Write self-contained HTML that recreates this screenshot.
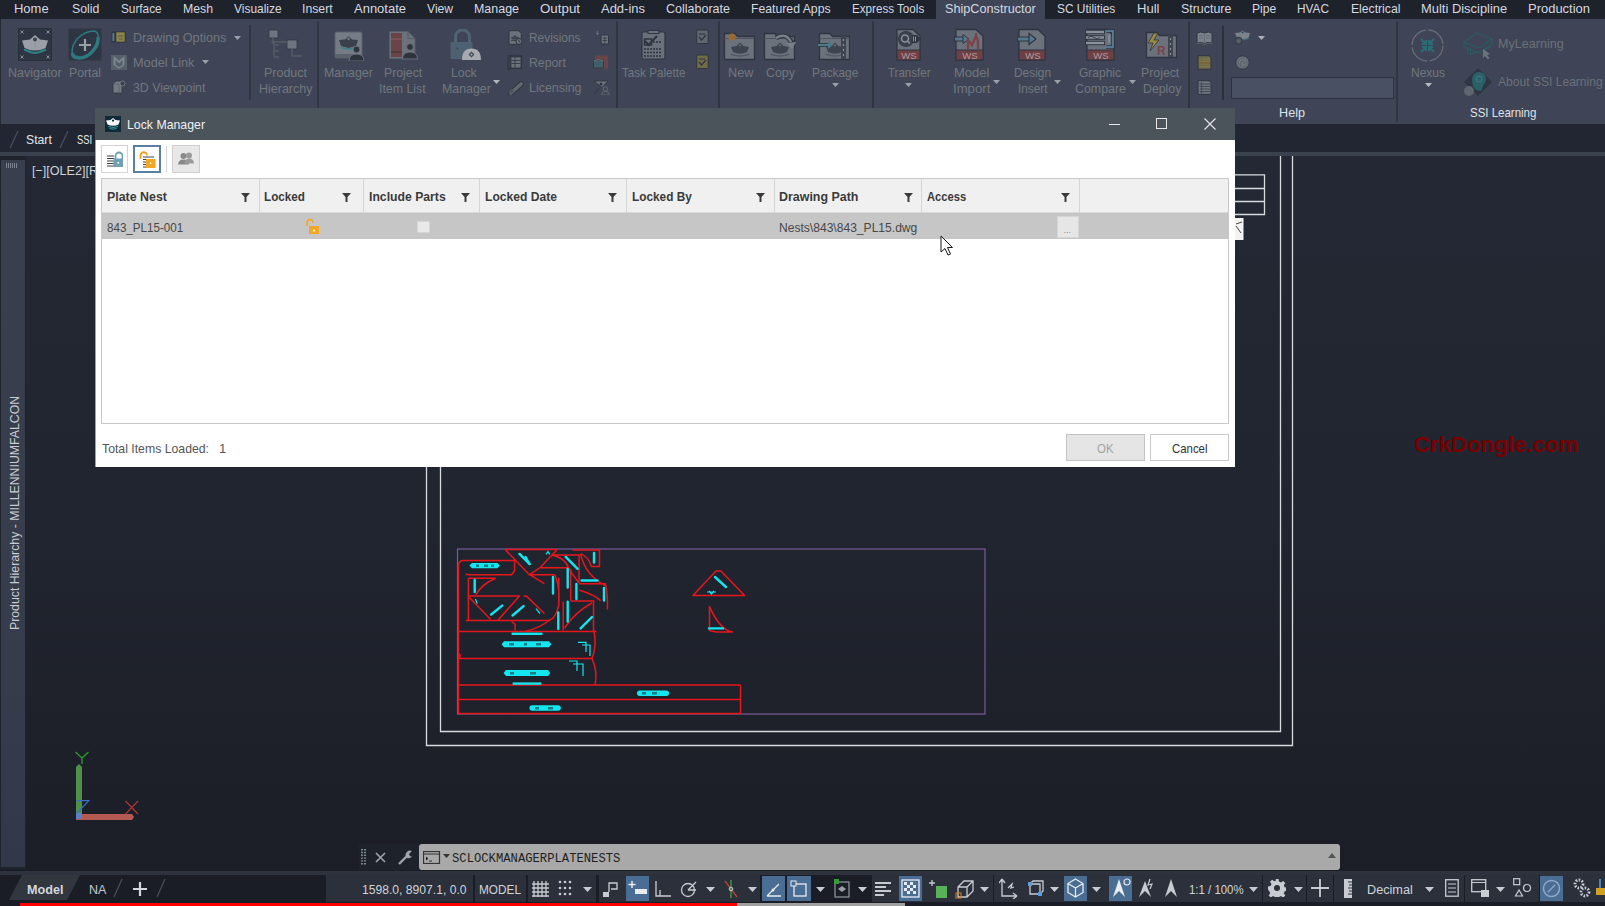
<!DOCTYPE html>
<html><head><meta charset="utf-8"><style>
html,body{margin:0;padding:0;}
body{width:1605px;height:906px;position:relative;overflow:hidden;background:#21252f;font-family:"Liberation Sans",sans-serif;}
.t{position:absolute;white-space:nowrap;transform-origin:0 50%;}
.r{position:absolute;}
svg{position:absolute;}
</style></head><body>
<div class="r" style="left:0px;top:0px;width:1605px;height:19px;background:#1e222b;"></div>
<div class="r" style="left:936px;top:0px;width:109px;height:19px;background:#3f4556;"></div>
<div class="t" id="t1" style="left:14.0px;top:1.80px;font-size:13px;line-height:13px;color:#d5d9e0;font-weight:normal;font-family:'Liberation Sans', sans-serif;transform:scaleX(0.9975);">Home</div>
<div class="t" id="t2" style="left:72.0px;top:1.80px;font-size:13px;line-height:13px;color:#d5d9e0;font-weight:normal;font-family:'Liberation Sans', sans-serif;transform:scaleX(0.9474);">Solid</div>
<div class="t" id="t3" style="left:121.0px;top:1.80px;font-size:13px;line-height:13px;color:#d5d9e0;font-weight:normal;font-family:'Liberation Sans', sans-serif;transform:scaleX(0.9060);">Surface</div>
<div class="t" id="t4" style="left:183.0px;top:1.80px;font-size:13px;line-height:13px;color:#d5d9e0;font-weight:normal;font-family:'Liberation Sans', sans-serif;transform:scaleX(0.9435);">Mesh</div>
<div class="t" id="t5" style="left:234.0px;top:1.80px;font-size:13px;line-height:13px;color:#d5d9e0;font-weight:normal;font-family:'Liberation Sans', sans-serif;transform:scaleX(0.9190);">Visualize</div>
<div class="t" id="t6" style="left:302.0px;top:1.80px;font-size:13px;line-height:13px;color:#d5d9e0;font-weight:normal;font-family:'Liberation Sans', sans-serif;transform:scaleX(0.9442);">Insert</div>
<div class="t" id="t7" style="left:354.0px;top:1.80px;font-size:13px;line-height:13px;color:#d5d9e0;font-weight:normal;font-family:'Liberation Sans', sans-serif;transform:scaleX(0.9991);">Annotate</div>
<div class="t" id="t8" style="left:426.7px;top:1.80px;font-size:13px;line-height:13px;color:#d5d9e0;font-weight:normal;font-family:'Liberation Sans', sans-serif;transform:scaleX(0.9337);">View</div>
<div class="t" id="t9" style="left:474.0px;top:1.80px;font-size:13px;line-height:13px;color:#d5d9e0;font-weight:normal;font-family:'Liberation Sans', sans-serif;transform:scaleX(0.9578);">Manage</div>
<div class="t" id="t10" style="left:540.0px;top:1.80px;font-size:13px;line-height:13px;color:#d5d9e0;font-weight:normal;font-family:'Liberation Sans', sans-serif;transform:scaleX(1.0248);">Output</div>
<div class="t" id="t11" style="left:601.0px;top:1.80px;font-size:13px;line-height:13px;color:#d5d9e0;font-weight:normal;font-family:'Liberation Sans', sans-serif;transform:scaleX(0.9982);">Add-ins</div>
<div class="t" id="t12" style="left:666.0px;top:1.80px;font-size:13px;line-height:13px;color:#d5d9e0;font-weight:normal;font-family:'Liberation Sans', sans-serif;transform:scaleX(0.9624);">Collaborate</div>
<div class="t" id="t13" style="left:751.0px;top:1.80px;font-size:13px;line-height:13px;color:#d5d9e0;font-weight:normal;font-family:'Liberation Sans', sans-serif;transform:scaleX(0.9413);">Featured Apps</div>
<div class="t" id="t14" style="left:851.8px;top:1.80px;font-size:13px;line-height:13px;color:#d5d9e0;font-weight:normal;font-family:'Liberation Sans', sans-serif;transform:scaleX(0.8948);">Express Tools</div>
<div class="t" id="t15" style="left:945.0px;top:1.80px;font-size:13px;line-height:13px;color:#d5d9e0;font-weight:normal;font-family:'Liberation Sans', sans-serif;transform:scaleX(0.9741);">ShipConstructor</div>
<div class="t" id="t16" style="left:1056.7px;top:1.80px;font-size:13px;line-height:13px;color:#d5d9e0;font-weight:normal;font-family:'Liberation Sans', sans-serif;transform:scaleX(0.9170);">SC Utilities</div>
<div class="t" id="t17" style="left:1136.5px;top:1.80px;font-size:13px;line-height:13px;color:#d5d9e0;font-weight:normal;font-family:'Liberation Sans', sans-serif;transform:scaleX(1.0042);">Hull</div>
<div class="t" id="t18" style="left:1180.6px;top:1.80px;font-size:13px;line-height:13px;color:#d5d9e0;font-weight:normal;font-family:'Liberation Sans', sans-serif;transform:scaleX(0.9555);">Structure</div>
<div class="t" id="t19" style="left:1251.7px;top:1.80px;font-size:13px;line-height:13px;color:#d5d9e0;font-weight:normal;font-family:'Liberation Sans', sans-serif;transform:scaleX(0.9335);">Pipe</div>
<div class="t" id="t20" style="left:1297.0px;top:1.80px;font-size:13px;line-height:13px;color:#d5d9e0;font-weight:normal;font-family:'Liberation Sans', sans-serif;transform:scaleX(0.9102);">HVAC</div>
<div class="t" id="t21" style="left:1350.6px;top:1.80px;font-size:13px;line-height:13px;color:#d5d9e0;font-weight:normal;font-family:'Liberation Sans', sans-serif;transform:scaleX(0.9365);">Electrical</div>
<div class="t" id="t22" style="left:1420.8px;top:1.80px;font-size:13px;line-height:13px;color:#d5d9e0;font-weight:normal;font-family:'Liberation Sans', sans-serif;transform:scaleX(0.9942);">Multi Discipline</div>
<div class="t" id="t23" style="left:1528.0px;top:1.80px;font-size:13px;line-height:13px;color:#d5d9e0;font-weight:normal;font-family:'Liberation Sans', sans-serif;transform:scaleX(0.9975);">Production</div>
<div class="r" style="left:0px;top:19px;width:1605px;height:105px;background:#3f4556;"></div>
<div class="r" style="left:0px;top:19px;width:1px;height:105px;background:#262a33;"></div>
<div class="r" style="left:317px;top:21px;width:2px;height:103px;background:#30353f;"></div>
<div class="r" style="left:616px;top:21px;width:2px;height:103px;background:#30353f;"></div>
<div class="r" style="left:718px;top:21px;width:2px;height:103px;background:#30353f;"></div>
<div class="r" style="left:872px;top:21px;width:2px;height:103px;background:#30353f;"></div>
<div class="r" style="left:1188px;top:21px;width:2px;height:103px;background:#30353f;"></div>
<div class="r" style="left:1396px;top:21px;width:2px;height:101px;background:#30353f;"></div>
<div class="r" style="left:249px;top:25px;width:1.5px;height:75px;background:#30353f;"></div>
<div class="r" style="left:1222px;top:26px;width:2px;height:74px;background:#2b303a;"></div>
<svg style="left:18px;top:28px" width="34" height="33" viewBox="0 0 34 33"><rect x="0.5" y="0.5" width="33" height="32" fill="#2f3643" stroke="#2a303b"/><path d="M2.5 2.5l3 3M5.5 2.5l-3 3M28.5 2.5l3 3M31.5 2.5l-3 3M2.5 27.5l3 3M5.5 27.5l-3 3M28.5 27.5l3 3M31.5 27.5l-3 3" stroke="#858b95" stroke-width="1"/><path d="M4 12.5L12 11.5L17 7L22 11.5L30 12.5L27.5 20Q17 25 6.5 20Z" fill="#9a9fa8"/><circle cx="17" cy="11.5" r="2" fill="#3a404c"/><path d="M17 15V21" stroke="#8a8f98" stroke-width="0.8"/><path d="M6 21.5Q11 24 17 25Q23 24 28 21.5" stroke="#2f7f86" stroke-width="2" fill="none"/></svg>
<div class="t" id="t24" style="left:8.3px;top:66.20px;font-size:13px;line-height:13px;color:#71777f;font-weight:normal;font-family:'Liberation Sans', sans-serif;transform:scaleX(0.9651);">Navigator</div>
<svg style="left:68px;top:28px" width="34" height="33" viewBox="0 0 34 33"><rect x="0.5" y="0.5" width="33" height="32" fill="#2f3643"/><path d="M5 27Q2 20 9 11Q17 3 26 3Q31 4 30 10" stroke="#2c7a80" stroke-width="1.5" fill="none"/><path d="M30 9Q31 17 23 25Q15 32 7 29Q4 28 5 25" stroke="#2c7a80" stroke-width="3.5" fill="none"/><path d="M17 11V23M11 17H23" stroke="#9a9fa8" stroke-width="2.2"/></svg>
<div class="t" id="t25" style="left:68.7px;top:66.20px;font-size:13px;line-height:13px;color:#71777f;font-weight:normal;font-family:'Liberation Sans', sans-serif;transform:scaleX(0.9420);">Portal</div>
<svg style="left:111px;top:31px" width="15" height="12" viewBox="0 0 15 12"><rect x="0.5" y="0.5" width="14" height="11" fill="#2f3643"/><rect x="1.5" y="2" width="1.8" height="8" fill="#5a7e94"/><rect x="5" y="1" width="9" height="10" fill="#8a8548" stroke="#2f3540" stroke-width="0.6"/><path d="M7 5H12M8 8H12" stroke="#5a5a3a" stroke-width="1"/></svg>
<div class="t" id="t26" style="left:132.6px;top:31.30px;font-size:13px;line-height:13px;color:#71777f;font-weight:normal;font-family:'Liberation Sans', sans-serif;transform:scaleX(0.9708);">Drawing Options</div>
<svg style="left:234px;top:35.5px" width="7" height="4" viewBox="0 0 7 4"><path d="M0 0H7L3.5 4Z" fill="#9aa0aa"/></svg>
<svg style="left:111px;top:55px" width="16" height="15" viewBox="0 0 16 15"><rect x="0" y="0" width="16" height="15" fill="#56606a"/><path d="M3.5 10V3L8 7L12.5 3V10" stroke="#7e8790" stroke-width="1.8" fill="none"/><path d="M3.5 10L8 13L12.5 10" stroke="#7e8790" stroke-width="1.2" fill="none"/></svg>
<div class="t" id="t27" style="left:132.6px;top:55.80px;font-size:13px;line-height:13px;color:#71777f;font-weight:normal;font-family:'Liberation Sans', sans-serif;transform:scaleX(0.9765);">Model Link</div>
<svg style="left:202px;top:60px" width="7" height="4" viewBox="0 0 7 4"><path d="M0 0H7L3.5 4Z" fill="#9aa0aa"/></svg>
<svg style="left:112px;top:80px" width="14" height="14" viewBox="0 0 14 14"><path d="M1 4L4 1H10V13H1Z" fill="#737983" stroke="#2f3540" stroke-width="0.8"/><path d="M1 4H7V13" stroke="#5c626c" stroke-width="0.8" fill="none"/><circle cx="10.5" cy="3.5" r="2.5" fill="#3b414c" stroke="#858b95" stroke-width="0.7"/></svg>
<div class="t" id="t28" style="left:132.6px;top:80.80px;font-size:13px;line-height:13px;color:#71777f;font-weight:normal;font-family:'Liberation Sans', sans-serif;transform:scaleX(0.9480);">3D Viewpoint</div>
<svg style="left:268px;top:29px" width="36" height="31" viewBox="0 0 36 31"><rect x="1" y="1" width="9" height="8" fill="#6e7580" stroke="#2f3540" stroke-width="0.8"/><rect x="19" y="11" width="10" height="9" fill="#6e7580" stroke="#2f3540" stroke-width="0.8"/><path d="M5 9V13H10M6 13V28M6 16H11M6 22H11M6 28H11M10 13H19M24 20V27H34" stroke="#565c67" stroke-width="1.4" fill="none"/><circle cx="5" cy="13" r="1.6" fill="#565c67"/></svg>
<div class="t" id="t29" style="left:264.0px;top:66.20px;font-size:13px;line-height:13px;color:#71777f;font-weight:normal;font-family:'Liberation Sans', sans-serif;transform:scaleX(0.9596);">Product</div>
<div class="t" id="t30" style="left:258.6px;top:82.40px;font-size:13px;line-height:13px;color:#71777f;font-weight:normal;font-family:'Liberation Sans', sans-serif;transform:scaleX(0.9600);">Hierarchy</div>
<svg style="left:334px;top:31px" width="30" height="30" viewBox="0 0 30 30"><rect x="1" y="1" width="27" height="26" rx="1.5" fill="#767c86" stroke="#5a606a"/><rect x="1" y="23" width="27" height="4" fill="#5d636d"/><path d="M5 9L11 8.5L14.5 5.5L18 8.5L24 9L22 15L14.5 17L7 15Z" fill="#3a404c"/><circle cx="14.5" cy="8" r="1.2" fill="#767c86"/><path d="M7 16Q14 20 22 16" stroke="#3f7d84" stroke-width="1.6" fill="none"/><circle cx="22.5" cy="18.5" r="3.4" fill="#2e333d" stroke="#767c86" stroke-width="0.8"/><path d="M15 30Q15 23 22.5 23Q30 23 30 30Z" fill="#2e333d" stroke="#767c86" stroke-width="0.8"/></svg>
<div class="t" id="t31" style="left:324.0px;top:66.20px;font-size:13px;line-height:13px;color:#71777f;font-weight:normal;font-family:'Liberation Sans', sans-serif;transform:scaleX(0.9510);">Manager</div>
<svg style="left:388px;top:30px" width="32" height="30" viewBox="0 0 32 30"><path d="M1.5 1.5H20L27 8.5V28.5H1.5Z" fill="#6c727c" stroke="#575d67"/><path d="M20 1.5V8.5H27" fill="none" stroke="#575d67"/><rect x="3" y="3" width="11" height="24" fill="#6a4448"/><rect x="3" y="8" width="11" height="2" fill="#7d5256"/><rect x="3" y="21" width="11" height="2" fill="#553a3d"/><circle cx="22" cy="17" r="3.4" fill="#2e333d" stroke="#767c86" stroke-width="0.8"/><path d="M14.5 29Q14.5 22 22 22Q29.5 22 29.5 29Z" fill="#2e333d" stroke="#767c86" stroke-width="0.8"/></svg>
<div class="t" id="t32" style="left:383.8px;top:66.20px;font-size:13px;line-height:13px;color:#71777f;font-weight:normal;font-family:'Liberation Sans', sans-serif;transform:scaleX(0.9439);">Project</div>
<div class="t" id="t33" style="left:379.4px;top:82.40px;font-size:13px;line-height:13px;color:#71777f;font-weight:normal;font-family:'Liberation Sans', sans-serif;transform:scaleX(0.9486);">Item List</div>
<svg style="left:449px;top:29px" width="33" height="32" viewBox="0 0 33 32"><path d="M6.5 14V8A7 7 0 0 1 20.5 8V14" stroke="#4f6373" stroke-width="3" fill="none"/><rect x="1.5" y="13" width="22" height="17" rx="1" fill="#4d6172"/><circle cx="8" cy="19.5" r="1.3" fill="#3e505e"/><path d="M13 31Q13 19.5 22.5 19.5Q32 19.5 32 31Z" fill="#a6aab1"/><path d="M22.5 22.5L25.5 25.5L22.5 28.5L19.5 25.5Z" fill="#454b55"/><circle cx="22.5" cy="25.5" r="1" fill="#a6aab1"/></svg>
<div class="t" id="t34" style="left:451.0px;top:66.20px;font-size:13px;line-height:13px;color:#71777f;font-weight:normal;font-family:'Liberation Sans', sans-serif;transform:scaleX(0.9356);">Lock</div>
<div class="t" id="t35" style="left:441.6px;top:82.40px;font-size:13px;line-height:13px;color:#71777f;font-weight:normal;font-family:'Liberation Sans', sans-serif;transform:scaleX(0.9510);">Manager</div>
<svg style="left:493.4px;top:79.8px" width="7" height="4" viewBox="0 0 7 4"><path d="M0 0H7L3.5 4Z" fill="#b0b5bd"/></svg>
<svg style="left:508px;top:30px" width="15" height="15" viewBox="0 0 15 15"><path d="M1 0.7H10.5L13.3 3.5V14.3H1Z" fill="#6c727c" stroke="#2f3540" stroke-width="1"/><path d="M3 7L5.5 6.5L7 5L8.5 6.5L11 7L10 9.5H4Z" fill="#3f4550"/><path d="M3 10.5H8" stroke="#3f4550"/><circle cx="11" cy="11.5" r="3" fill="#6c727c" stroke="#2f3540" stroke-width="1"/><path d="M11 10V11.5L12.3 12.5" stroke="#2f3540" stroke-width="0.9" fill="none"/></svg>
<div class="t" id="t36" style="left:529.0px;top:31.30px;font-size:13px;line-height:13px;color:#71777f;font-weight:normal;font-family:'Liberation Sans', sans-serif;transform:scaleX(0.9138);">Revisions</div>
<svg style="left:507px;top:55px" width="16" height="16" viewBox="0 0 16 16"><path d="M1 1.5Q2 0.7 3 0.7H14.5V13.5H3L1 15.3Z" fill="#3a404b" stroke="#2f3540"/><rect x="4" y="2" width="10" height="11" fill="#6c727c" stroke="#2f3540" stroke-width="0.8"/><path d="M4.5 5.5H13.5M4.5 8.5H13.5M8 2.5V12.5" stroke="#2f3540" stroke-width="0.8"/></svg>
<div class="t" id="t37" style="left:529.0px;top:55.80px;font-size:13px;line-height:13px;color:#71777f;font-weight:normal;font-family:'Liberation Sans', sans-serif;transform:scaleX(0.9428);">Report</div>
<svg style="left:508px;top:81px" width="16" height="14" viewBox="0 0 16 14"><path d="M3 12L13 3" stroke="#2f3540" stroke-width="5.5" stroke-linecap="round"/><path d="M3 12L13 3" stroke="#62686f" stroke-width="3.6" stroke-linecap="round"/><path d="M2 11.5L5 8.8" stroke="#4f555d" stroke-width="3.6"/></svg>
<div class="t" id="t38" style="left:529.0px;top:80.80px;font-size:13px;line-height:13px;color:#71777f;font-weight:normal;font-family:'Liberation Sans', sans-serif;transform:scaleX(0.9556);">Licensing</div>
<svg style="left:596px;top:31px" width="14" height="14" viewBox="0 0 14 14"><path d="M1.5 0V4M0 2L1.5 3.5L3 2" stroke="#6d747e" stroke-width="0.8" fill="none"/><rect x="5" y="4" width="7.5" height="9" rx="1" fill="#6c727c" stroke="#2f3540"/><path d="M6.5 7H11M6.5 9.5H11M8.75 6V12" stroke="#2f3540" stroke-width="0.7"/></svg>
<svg style="left:593px;top:55px" width="16" height="15" viewBox="0 0 16 15"><rect x="2" y="0.5" width="13" height="13" fill="#6b4545"/><rect x="0.5" y="5" width="10" height="8" fill="#3f6068" stroke="#2f3540" stroke-width="0.8"/><path d="M0.5 6Q5 3 10.5 6" stroke="#6c727c" fill="none"/></svg>
<svg style="left:593px;top:80px" width="17" height="15" viewBox="0 0 17 15"><path d="M1 1H15L9 7.5Z" fill="#6c727c" stroke="#2f3540" stroke-width="0.8"/><circle cx="8" cy="4" r="1.5" fill="#2f3540"/><path d="M1 14L6 8" stroke="#2f3540"/><circle cx="12.5" cy="9" r="2.3" fill="#3f4550" stroke="#6c727c" stroke-width="0.8"/><path d="M8.5 15Q8.5 11.5 12.5 11.5Q16.5 11.5 16.5 15Z" fill="#3f4550" stroke="#6c727c" stroke-width="0.8"/></svg>
<svg style="left:641px;top:30px" width="25" height="30" viewBox="0 0 25 30"><rect x="1" y="2" width="23" height="27" rx="1.5" fill="#6b717b" stroke="#2f3540" stroke-width="1.2"/><rect x="7" y="0.5" width="11" height="3" fill="#6b717b" stroke="#2f3540" stroke-width="1"/><rect x="3.5" y="9" width="7" height="6" fill="none" stroke="#2f3540" stroke-width="1.5"/><path d="M4 11L7.5 15L16 6" stroke="#2f3540" stroke-width="2" fill="none"/><path d="M12 12H20M3 19H20M3 22.5H20M3 26H20" stroke="#2f3540" stroke-width="1.3" stroke-dasharray="2 1"/></svg>
<div class="t" id="t39" style="left:622.4px;top:66.20px;font-size:13px;line-height:13px;color:#71777f;font-weight:normal;font-family:'Liberation Sans', sans-serif;transform:scaleX(0.8951);">Task Palette</div>
<svg style="left:696px;top:29px" width="13" height="15" viewBox="0 0 13 15"><rect x="0.7" y="1" width="11.5" height="13.5" rx="1" fill="#5f6670" stroke="#2f3540"/><path d="M3 5H9M3 8L5.5 11L10 6" stroke="#2f3540" stroke-width="1.2" fill="none"/></svg>
<svg style="left:696px;top:54px" width="13" height="15" viewBox="0 0 13 15"><rect x="0.7" y="1" width="11.5" height="13.5" rx="1" fill="#6f6c47" stroke="#2f3540"/><path d="M3 5H9M3 8L5.5 11L10 6" stroke="#2f3540" stroke-width="1.2" fill="none"/></svg>
<svg style="left:723px;top:30px" width="33" height="31" viewBox="0 0 33 31"><path d="M1.5 3.5H12L14.5 6.5H31.5V29.5H1.5Z" fill="#6c727c" stroke="#2f3540" stroke-width="1.3"/><path d="M1.5 8.5H31.5" stroke="#4f555f" stroke-width="1"/><path d="M8 17L13.5 16L17 12.5L20.5 16L26 17L24 22Q17 25.5 10 22Z" fill="#3f4550"/><circle cx="17" cy="15.5" r="1" fill="#6c727c"/><path d="M8 24Q17 28 26 24" stroke="#565c66" stroke-width="1.5" fill="none"/><circle cx="9" cy="7" r="3.5" fill="#9a6a35"/></svg>
<div class="t" id="t40" style="left:727.6px;top:66.20px;font-size:13px;line-height:13px;color:#71777f;font-weight:normal;font-family:'Liberation Sans', sans-serif;transform:scaleX(0.9763);">New</div>
<svg style="left:763px;top:30px" width="33" height="31" viewBox="0 0 33 31"><path d="M1.5 3.5H12L14.5 6.5H31.5V29.5H1.5Z" fill="#6c727c" stroke="#2f3540" stroke-width="1.3"/><path d="M1.5 8.5H31.5" stroke="#4f555f" stroke-width="1"/><path d="M8 17L13.5 16L17 12.5L20.5 16L26 17L24 22Q17 25.5 10 22Z" fill="#3f4550"/><circle cx="17" cy="15.5" r="1" fill="#6c727c"/><path d="M8 24Q17 28 26 24" stroke="#565c66" stroke-width="1.5" fill="none"/><path d="M13 8Q23 2 28 12L30 10" stroke="#2f3540" stroke-width="4.5" fill="none"/><path d="M13 8Q23 2 28 12" stroke="#7a8088" stroke-width="2.5" fill="none"/><path d="M24 13L29 19L33 12Z" fill="#7a8088"/></svg>
<div class="t" id="t41" style="left:766.0px;top:66.20px;font-size:13px;line-height:13px;color:#71777f;font-weight:normal;font-family:'Liberation Sans', sans-serif;transform:scaleX(0.9552);">Copy</div>
<svg style="left:818px;top:30px" width="33" height="31" viewBox="0 0 33 31"><path d="M1.5 3.5H12L14.5 6.5H31.5V29.5H1.5Z" fill="#6c727c" stroke="#2f3540" stroke-width="1.3"/><path d="M1.5 8.5H31.5" stroke="#4f555f" stroke-width="1"/><path d="M8 17L13.5 16L17 12.5L20.5 16L26 17L24 22Q17 25.5 10 22Z" fill="#3f4550"/><circle cx="17" cy="15.5" r="1" fill="#6c727c"/><path d="M8 24Q17 28 26 24" stroke="#565c66" stroke-width="1.5" fill="none"/><path d="M0 15H12" stroke="#2f3540" stroke-width="4"/><path d="M0 15H12" stroke="#4c7a86" stroke-width="2.4"/><path d="M10 11L15 15L10 19Z" fill="#4c7a86"/><rect x="23" y="6" width="5" height="23" fill="#3f4550"/><path d="M25.5 9V11M25.5 14V16M25.5 19V21M25.5 24V26" stroke="#8a9098" stroke-width="1.2"/></svg>
<div class="t" id="t42" style="left:811.7px;top:66.20px;font-size:13px;line-height:13px;color:#71777f;font-weight:normal;font-family:'Liberation Sans', sans-serif;transform:scaleX(0.9151);">Package</div>
<svg style="left:832px;top:83px" width="7" height="4" viewBox="0 0 7 4"><path d="M0 0H7L3.5 4Z" fill="#9aa0aa"/></svg>
<svg style="left:895px;top:28px" width="29" height="34" viewBox="0 0 29 34"><path d="M2 1.5H18 L25 8 V32 H2Z" fill="#6c727c" stroke="#2f3540" stroke-width="1.3"/><circle cx="11" cy="11" r="8" fill="#3b414c"/><path d="M3 11h16M11 3v16M5.5 5.5l11 11M16.5 5.5l-11 11" stroke="#3b414c" stroke-width="3"/><circle cx="10" cy="10.5" r="3.5" fill="none" stroke="#8d939b" stroke-width="1.5"/><path d="M12.5 13L15 15.5" stroke="#8d939b" stroke-width="1.5"/><path d="M17 7H22L25.5 11L22 15H17Z" fill="#2f3540"/><path d="M18.5 8.5V13.5M20.5 8.5V13.5" stroke="#8d939b" stroke-width="1"/><rect x="2" y="22" width="23" height="10" fill="#6e4044" stroke="#2f3540" stroke-width="1"/><text x="14" y="30.5" font-size="9.5" font-family="Liberation Sans" fill="#b39a9e" text-anchor="middle">WS</text></svg>
<div class="t" id="t43" style="left:887.5px;top:66.20px;font-size:13px;line-height:13px;color:#71777f;font-weight:normal;font-family:'Liberation Sans', sans-serif;transform:scaleX(0.8869);">Transfer</div>
<svg style="left:905px;top:83px" width="7" height="4" viewBox="0 0 7 4"><path d="M0 0H7L3.5 4Z" fill="#9aa0aa"/></svg>
<svg style="left:954px;top:28px" width="33" height="34" viewBox="0 0 33 34"><path d="M2 1.5H22 L29 8 V32 H2Z" fill="#6c727c" stroke="#2f3540" stroke-width="1.3"/><path d="M0 11H11" stroke="#2f3540" stroke-width="5"/><path d="M1 11H11" stroke="#56788c" stroke-width="3"/><path d="M9 6.5L15 11L9 15.5Z" fill="#56788c" stroke="#2f3540" stroke-width="1"/><path d="M14 21V12L18 17L22 8L24 13V21" stroke="#7a4448" stroke-width="2.5" fill="none"/><path d="M22 5V9" stroke="#7a4448" stroke-width="2"/><rect x="2" y="22" width="27" height="10" fill="#6e4044" stroke="#2f3540" stroke-width="1"/><text x="16" y="30.5" font-size="9.5" font-family="Liberation Sans" fill="#b39a9e" text-anchor="middle">WS</text></svg>
<div class="t" id="t44" style="left:953.7px;top:66.20px;font-size:13px;line-height:13px;color:#71777f;font-weight:normal;font-family:'Liberation Sans', sans-serif;transform:scaleX(0.9966);">Model</div>
<div class="t" id="t45" style="left:952.7px;top:82.40px;font-size:13px;line-height:13px;color:#71777f;font-weight:normal;font-family:'Liberation Sans', sans-serif;transform:scaleX(1.0124);">Import</div>
<svg style="left:993px;top:79.8px" width="7" height="4" viewBox="0 0 7 4"><path d="M0 0H7L3.5 4Z" fill="#9aa0aa"/></svg>
<svg style="left:1017px;top:28px" width="32" height="34" viewBox="0 0 32 34"><path d="M2 1.5H21 L28 8 V32 H2Z" fill="#6c727c" stroke="#2f3540" stroke-width="1.3"/><path d="M0 11H13" stroke="#2f3540" stroke-width="5"/><path d="M1 11H13" stroke="#56788c" stroke-width="3"/><path d="M12 5.5L19 11L12 16.5Z" fill="#56788c" stroke="#2f3540" stroke-width="1.2"/><rect x="2" y="22" width="26" height="10" fill="#6e4044" stroke="#2f3540" stroke-width="1"/><text x="16" y="30.5" font-size="9.5" font-family="Liberation Sans" fill="#b39a9e" text-anchor="middle">WS</text></svg>
<div class="t" id="t46" style="left:1014.0px;top:66.20px;font-size:13px;line-height:13px;color:#71777f;font-weight:normal;font-family:'Liberation Sans', sans-serif;transform:scaleX(0.9143);">Design</div>
<div class="t" id="t47" style="left:1018.0px;top:82.40px;font-size:13px;line-height:13px;color:#71777f;font-weight:normal;font-family:'Liberation Sans', sans-serif;transform:scaleX(0.9042);">Insert</div>
<svg style="left:1054px;top:79.8px" width="7" height="4" viewBox="0 0 7 4"><path d="M0 0H7L3.5 4Z" fill="#9aa0aa"/></svg>
<svg style="left:1085px;top:28px" width="33" height="34" viewBox="0 0 33 34"><path d="M2 1.5H22 L29 8 V32 H2Z" fill="#6c727c" stroke="#2f3540" stroke-width="1.3"/><path d="M0 4H20M0 9.5H20M0 15H20" stroke="#2f3540" stroke-width="4.5"/><path d="M1 4H19M1 9.5H19M1 15H19" stroke="#8a9099" stroke-width="2.5"/><path d="M3 9.5Q6 7 9 9.5T15 9.5" stroke="#3b414c" stroke-width="1" fill="none"/><path d="M21 3H28V19H21" stroke="#2f3540" stroke-width="3.5" fill="none"/><path d="M21 3H28V19H21" stroke="#56788c" stroke-width="2" fill="none"/><path d="M24 7V15" stroke="#8a9099" stroke-width="1.5"/><rect x="2" y="22" width="27" height="10" fill="#6e4044" stroke="#2f3540" stroke-width="1"/><text x="16" y="30.5" font-size="9.5" font-family="Liberation Sans" fill="#b39a9e" text-anchor="middle">WS</text></svg>
<div class="t" id="t48" style="left:1079.0px;top:66.20px;font-size:13px;line-height:13px;color:#71777f;font-weight:normal;font-family:'Liberation Sans', sans-serif;transform:scaleX(0.9224);">Graphic</div>
<div class="t" id="t49" style="left:1075.0px;top:82.40px;font-size:13px;line-height:13px;color:#71777f;font-weight:normal;font-family:'Liberation Sans', sans-serif;transform:scaleX(0.9538);">Compare</div>
<svg style="left:1128.6px;top:79.8px" width="7" height="4" viewBox="0 0 7 4"><path d="M0 0H7L3.5 4Z" fill="#9aa0aa"/></svg>
<svg style="left:1145px;top:29px" width="33" height="31" viewBox="0 0 33 31"><path d="M1.5 3.5H12L14.5 6.5H31.5V28.5H1.5Z" fill="#6c727c" stroke="#2f3540" stroke-width="1.3"/><path d="M9 4L3 14H8L5 22L14 11H9L13 4Z" fill="#9a8a3a" stroke="#2f3540" stroke-width="0.8"/><text x="12" y="26" font-size="12" font-weight="bold" font-family="Liberation Sans" fill="#7a4448">R</text><rect x="23" y="6" width="5" height="22" fill="#3f4550"/><path d="M25.5 9V11M25.5 14V16M25.5 19V21M25.5 24V26" stroke="#8a9098" stroke-width="1.2"/></svg>
<div class="t" id="t50" style="left:1140.7px;top:66.20px;font-size:13px;line-height:13px;color:#71777f;font-weight:normal;font-family:'Liberation Sans', sans-serif;transform:scaleX(0.9464);">Project</div>
<div class="t" id="t51" style="left:1142.7px;top:82.40px;font-size:13px;line-height:13px;color:#71777f;font-weight:normal;font-family:'Liberation Sans', sans-serif;transform:scaleX(0.9464);">Deploy</div>
<svg style="left:1196px;top:31px" width="18" height="14" viewBox="0 0 18 14"><path d="M1 2Q5 0 8.5 2Q12 0 16 2V12Q12 10.5 8.5 12.5Q5 10.5 1 12Z" fill="#7c828c" stroke="#2f3540" stroke-width="1"/><path d="M8.5 2V12.5M3 4.5H7M3 7H7M10 4.5H14M10 7H14" stroke="#5f666f" stroke-width="0.8"/><path d="M0.5 12.5Q5 11 8.5 13.5Q12 11 16.5 12.5" stroke="#5f666f" fill="none"/></svg>
<svg style="left:1197px;top:55px" width="15" height="15" viewBox="0 0 15 15"><path d="M1 0.7H12L14 2.7V14.3H1Z" fill="#6d6a4c" stroke="#2f3540"/><path d="M2.5 4H13M2.5 6.5H13M2.5 9H13M2.5 11.5H13" stroke="#8a7a46" stroke-width="1.2"/><path d="M2.5 7.8H13" stroke="#7a5a3a" stroke-width="1.2"/><path d="M4.5 2V14" stroke="#5f6670" stroke-width="0.8"/></svg>
<svg style="left:1197px;top:80px" width="15" height="15" viewBox="0 0 15 15"><path d="M1 0.7H12L14 2.7V14.3H1Z" fill="#70767f" stroke="#2f3540"/><path d="M2.5 4H13M2.5 6.5H13M2.5 9H13M2.5 11.5H13" stroke="#3f4550" stroke-width="0.9"/><path d="M4.5 2V14" stroke="#3f4550" stroke-width="0.8"/></svg>
<svg style="left:1234px;top:30px" width="17" height="15" viewBox="0 0 17 15"><path d="M1 3L6 2.5L8.5 0.5L11 2.5L16 3L14.5 8Q8.5 10.5 3 8Z" fill="#7c828c"/><circle cx="8.5" cy="2.5" r="1" fill="#3f4556"/><path d="M6 9Q11 11 15 8" stroke="#3c6a72" stroke-width="1.2" fill="none"/><circle cx="4.5" cy="10.8" r="3.6" fill="#4f555f" stroke="#2f3540" stroke-width="1"/><path d="M3.5 10L5.5 12" stroke="#7c828c" stroke-width="0.8"/></svg>
<svg style="left:1258px;top:36px" width="7" height="4" viewBox="0 0 7 4"><path d="M0 0H7L3.5 4Z" fill="#aab0b8"/></svg>
<svg style="left:1235px;top:55px" width="15" height="15" viewBox="0 0 15 15"><circle cx="7.5" cy="7.5" r="6.6" fill="#6e747e" stroke="#2f3540" stroke-width="0.8"/><circle cx="7.5" cy="7.5" r="4.5" fill="none" stroke="#5c626b" stroke-width="1"/><path d="M5.5 11Q5.5 6 7.5 6Q9.5 6 9.5 9" stroke="#5c626b" stroke-width="1.2" fill="none"/></svg>
<div class="r" style="left:1230.5px;top:76.5px;width:163px;height:22px;background:#4a5064;box-sizing:border-box;border:1px solid #2d323d;"></div>
<div class="t" id="t52" style="left:1279.0px;top:106.30px;font-size:13px;line-height:13px;color:#dfe3e9;font-weight:normal;font-family:'Liberation Sans', sans-serif;transform:scaleX(0.9720);">Help</div>
<svg style="left:1411px;top:29px" width="34" height="34" viewBox="0 0 34 34"><circle cx="16.5" cy="16.5" r="15.5" fill="none" stroke="#666c76" stroke-width="1.3" stroke-dasharray="22 2.4"/><g stroke="#2c6d75" stroke-width="2" fill="none"><path d="M10 10L15 15M15 11V15H11M23 10L18 15M18 11V15H22M10 23L15 18M15 22V18H11M23 23L18 18M18 22V18H22"/></g></svg>
<div class="t" id="t53" style="left:1410.9px;top:65.80px;font-size:13px;line-height:13px;color:#71777f;font-weight:normal;font-family:'Liberation Sans', sans-serif;transform:scaleX(0.9224);">Nexus</div>
<svg style="left:1424.5px;top:83px" width="7" height="4" viewBox="0 0 7 4"><path d="M0 0H7L3.5 4Z" fill="#b8bdc4"/></svg>
<svg style="left:1462px;top:30px" width="32" height="29" viewBox="0 0 32 29"><path d="M2 12L15 3L30 9L17 18Z" fill="none" stroke="#2a5c64" stroke-width="1.1"/><path d="M2 12V17L17 23L30 14V9M6 17V24M8.5 18V25M9 24L14 22M22 20L29 17" fill="none" stroke="#2a5c64" stroke-width="1.1"/><path d="M21 19L21 28L23 26L26 29.5L27.5 28L25 25L28 24Z" fill="#6d737d"/></svg>
<div class="t" id="t54" style="left:1497.7px;top:37.10px;font-size:13px;line-height:13px;color:#6a707a;font-weight:normal;font-family:'Liberation Sans', sans-serif;transform:scaleX(0.9685);">MyLearning</div>
<svg style="left:1462px;top:67px" width="31" height="30" viewBox="0 0 31 30"><path d="M16 1L30 15L16 29L2 15Z" fill="#2f3643"/><circle cx="17" cy="12" r="7" fill="#2c6069"/><path d="M10.5 13Q10 24 19 24L22 17Z" fill="#2c6069"/><circle cx="17" cy="12" r="3" fill="none" stroke="#3d7a84" stroke-width="1"/><circle cx="7" cy="24" r="5" fill="#5f6670"/></svg>
<div class="t" id="t55" style="left:1497.7px;top:74.80px;font-size:13px;line-height:13px;color:#6a707a;font-weight:normal;font-family:'Liberation Sans', sans-serif;transform:scaleX(0.9286);">About SSI Learning</div>
<div class="t" id="t56" style="left:1469.6px;top:106.00px;font-size:13px;line-height:13px;color:#dfe3e9;font-weight:normal;font-family:'Liberation Sans', sans-serif;transform:scaleX(0.8833);">SSI Learning</div>
<div class="r" style="left:0px;top:124px;width:1605px;height:28px;background:#212632;"></div>
<div class="r" style="left:0px;top:152px;width:1605px;height:4px;background:#3b414c;"></div>
<div class="r" style="left:0px;top:156px;width:1605px;height:715px;background:linear-gradient(to bottom,#242834 0%,#21252f 50%,#1b1e27 100%);"></div>
<div class="r" style="left:0px;top:156px;width:26px;height:713px;background:#1f232c;"></div>
<div class="r" style="left:1px;top:160px;width:24px;height:707px;background:linear-gradient(to bottom,#3a3f50 0%,#383d4e 60%,#32374a 100%);"></div>
<div class="r" style="left:0px;top:871px;width:1605px;height:4px;background:#2d323d;"></div>
<svg style="left:8px;top:130px" width="12" height="19" viewBox="0 0 12 19"><path d="M2 18L10 1" stroke="#4a5060" stroke-width="1.2"/></svg>
<div class="t" id="t57" style="left:26.2px;top:132.55px;font-size:13.5px;line-height:13.5px;color:#e3e6ea;font-weight:normal;font-family:'Liberation Sans', sans-serif;transform:scaleX(0.9048);">Start</div>
<svg style="left:58px;top:130px" width="12" height="19" viewBox="0 0 12 19"><path d="M2 18L10 1" stroke="#4a5060" stroke-width="1.2"/></svg>
<div class="t" id="t58" style="left:76.8px;top:132.55px;font-size:13.5px;line-height:13.5px;color:#e3e6ea;font-weight:normal;font-family:'Liberation Sans', sans-serif;transform:scaleX(0.6983);">SSI</div>
<svg style="left:6px;top:163px" width="11" height="5" viewBox="0 0 11 5"><path d="M0.5 0V5M2.5 0V5M4.5 0V5M6.5 0V5M8.5 0V5M10.5 0V5" stroke="#7d838e" stroke-width="1"/></svg>
<div class="t" style="left:0px;top:0px;font-size:13px;line-height:13px;color:#c9cdd3;transform-origin:0 0;transform:translate(7.5px,630px) rotate(-90deg) scaleX(0.945);">Product Hierarchy - MILLENNIUMFALCON</div>
<div class="t" id="t59" style="left:31.8px;top:163.75px;font-size:13.5px;line-height:13.5px;color:#cfd3d8;font-weight:normal;font-family:'Liberation Sans', sans-serif;transform:scaleX(0.9306);">[&#8722;][OLE2][R</div>
<svg style="left:0px;top:0px" width="1605" height="906" viewBox="0 0 1605 906"><g fill="none" stroke="#d8dade" stroke-width="1.3"><path d="M426.5 156V745.5H1292.5V156"/><path d="M440.5 156V731.5H1280.5V156"/><path d="M1235 174.8H1264.5V214.5H1235M1235 188.5H1264.5M1235 201.5H1264.5"/></g><rect x="1235" y="218" width="8.5" height="22" fill="#f2f2f2"/><path d="M1236 224L1242 222M1236 226L1241 233" stroke="#444" stroke-width="1"/><rect x="457.5" y="549" width="527.5" height="165" fill="none" stroke="#7a5a9a" stroke-width="1.2"/></svg>
<svg style="left:0px;top:0px" width="1605" height="906" viewBox="0 0 1605 906"><g fill="none" stroke="#e8161c" stroke-width="1.5" stroke-linejoin="round"><path d="M463 560.4H514.6V570.8L511.6 574.8H469.4L465.4 574.3M463 560.4Q458.5 561 458.5 565V631.4"/><path d="M505.1 549.5H556.8M528.5 573.8L505.1 549.5"/><path d="M468.4 578.3H495.7M495.7 578.3Q482 584 475.9 594.7M468.4 578.3V620.5M465.9 620.5H549.8"/><path d="M468.4 596.1H519.5L497.7 620.5M523.5 596.1L526.5 596.1L544.4 613.5M469.4 597.6L490.7 619.5"/><path d="M511.6 621.5L515.1 624.4V630.4"/><path d="M556.8 550L539.9 567.8L529 574.8H554.8M540.9 567.8H568.7M528.5 573.8L544.4 583.7"/><path d="M551.8 554.9H579.1V582.7M551.8 554.9Q566 558 568.7 568.7Q575 578 579 583"/><path d="M558.8 577.8V604.6M570.7 568.8V600.6M554.8 574.8Q560 586 558.8 604.6Q556 618 549.8 620 Q540 628 525 631.4"/><path d="M572.7 550H599.5V566.4H591.5Q588 556 580.6 553.9"/><path d="M579.1 583.7H605.4Q608 595 607.4 609.5M580.6 553.9Q585 575 605.4 585.7M579.1 590Q595 595 600.6 600.6"/><path d="M570.7 601.1H594.5M563.2 601.6V630.4M593.5 601.6V631.4M564.6 628Q575 612 592 603"/><path d="M458.5 631.4H596.5M458.5 631.4V713.5H740.5V685M458.5 658.6H592M458.5 685H740.5M458.5 699.5H740.5"/><path d="M594 631.4Q597 645 592 658.6Q598 672 595 685"/><path d="M458.5 653Q462 655.8 458.5 658.6"/><path d="M693 595.5L716 571L721 571L744.5 595.5Z"/><path d="M709.5 606.6V630.4L716 632H732.5Q720 630 709.5 606.6Z"/></g><g stroke="#14e6f0" stroke-width="2.4" stroke-linecap="round" fill="none"><path d="M519.5 553.9L529.5 563.9M474.7 580V592M491.2 614.5L502.2 605.6M512.6 615.5L523.5 606.1"/><path d="M525.5 557L529.5 564M565.7 556.9L577.6 568.8M594 553V562.5M553 577V593.5M567.7 569V587.5M576.4 584V599M581.6 580.5H597.5M604 588V600.5"/><path d="M558.3 612.5V628.9M567.7 601.6V621.5M580.6 628.4L592 617M715 577L726 587M709 628.4H723"/></g><g stroke="#14e6f0" stroke-width="1.2" fill="none"><path d="M475.4 599.1L477.3 603.6M536 608.6L540 613.5M546 554.4L548 551.5L549.8 554.4M707 592H716M709 591L711.5 594L714 591"/><path d="M578 642.3H586V652M582 645H590V656M569 661H577V671M573 664H583V676"/></g><g fill="#14e6f0"><path d="M472 562.9H497.5L499.7 565.6L497.5 568.3H472L469.4 565.6Z"/><path d="M504 641.3H549L551.3 644.3L549 647.3H504L501.6 644.3Z"/><path d="M506 670H548L550.3 673L548 676H506L503.6 673Z"/><rect x="637" y="690.5" width="32" height="5.5" rx="2.7"/><rect x="529.4" y="705.2" width="31.4" height="5.6" rx="2.8"/><rect x="511.6" y="632.6" width="30.8" height="2.4"/><rect x="512.6" y="682.4" width="28.8" height="2.4"/></g><g fill="#1a2a30" opacity="0.55"><rect x="476" y="564.5" width="3" height="2.5"/><rect x="484" y="564.5" width="4" height="2.5"/><rect x="491" y="564.5" width="3" height="2.5"/><rect x="509" y="643" width="5" height="2.5"/><rect x="524" y="643" width="3" height="2.5"/><rect x="536" y="643" width="5" height="2.5"/><rect x="510" y="672" width="4" height="2.5"/><rect x="530" y="672" width="6" height="2.5"/><rect x="642" y="692" width="4" height="2.5"/><rect x="652" y="692" width="5" height="2.5"/><rect x="535" y="707" width="4" height="2.5"/><rect x="548" y="707" width="5" height="2.5"/></g></svg>
<svg style="left:60px;top:745px" width="90" height="80" viewBox="0 0 90 80"><path d="M15.5 7L22 13L28.5 7M22 13V19" stroke="#2e9a2e" stroke-width="1.3" fill="none"/><path d="M16 73V22L19 19L22 22V73Z" fill="#4f8f4a"/><path d="M16 69H72L74 72L72 75H16Z" fill="#b45a52"/><path d="M16.5 55.6H28.8L16.5 68.5" stroke="#3a6ec8" stroke-width="1.2" fill="none"/><path d="M65.5 56L78 69M78 56L65.5 69" stroke="#b03535" stroke-width="1.2"/><rect x="16" y="68" width="6" height="6" fill="#5a80c0"/></svg>
<div class="t" id="t60" style="left:1413.7px;top:434.20px;font-size:22px;line-height:22px;color:#780000;font-weight:bold;font-family:'Liberation Sans', sans-serif;transform:scaleX(1.0117);">CrkDongle.com</div>
<div class="r" style="left:0px;top:875px;width:1605px;height:31px;background:#1a1d25;"></div>
<div class="r" style="left:20px;top:903px;width:717px;height:3px;background:#ff0000;"></div>
<div class="r" style="left:737px;top:903px;width:168px;height:3px;background:#a0a0a0;"></div>
<div class="r" style="left:359px;top:844px;width:61px;height:26px;background:#1e222b;"></div>
<div class="r" style="left:419px;top:844px;width:921px;height:26px;background:#a9a9a9;border-radius:3px;"></div>
<svg style="left:359px;top:848px" width="12" height="18" viewBox="0 0 12 18"><path d="M3 1V17M6 1V17" stroke="#9aa0aa" stroke-width="1.6" stroke-dasharray="1.4 1.4"/></svg>
<svg style="left:375px;top:852px" width="11" height="11" viewBox="0 0 11 11"><path d="M1 1L10 10M10 1L1 10" stroke="#a0a5ad" stroke-width="1.6"/></svg>
<svg style="left:397px;top:849px" width="17" height="17" viewBox="0 0 17 17"><path d="M2 15L10 7" stroke="#a0a5ad" stroke-width="2.4"/><path d="M9 8A4.5 4.5 0 0 1 15 2L12 5L13 7L15 8L16 5A4.5 4.5 0 0 1 10 9Z" fill="#a0a5ad"/></svg>
<svg style="left:423px;top:851px" width="28" height="13" viewBox="0 0 28 13"><rect x="0.5" y="0.5" width="16" height="12" fill="none" stroke="#333" stroke-width="1.2"/><path d="M0.5 3H16.5" stroke="#333"/><path d="M3 6L5 7.5L3 9M6 10H9" stroke="#333" stroke-width="1"/><path d="M20 3H27L23.5 7Z" fill="#333"/></svg>
<div class="t" id="t61" style="left:452.0px;top:853.15px;font-size:12.5px;line-height:12.5px;color:#1e1e1e;font-weight:normal;font-family:'Liberation Mono', monospace;transform:scaleX(0.9761);">SCLOCKMANAGERPLATENESTS</div>
<svg style="left:1328px;top:853px" width="8" height="5" viewBox="0 0 8 5"><path d="M0 5H8L4 0Z" fill="#555"/></svg>
<svg style="left:9px;top:875px" width="72" height="25" viewBox="0 0 72 25"><path d="M13 0H71L58 25H0Z" fill="#31363f"/></svg>
<div class="t" id="t62" style="left:27.0px;top:882.50px;font-size:13px;line-height:13px;color:#d3d7dd;font-weight:bold;font-family:'Liberation Sans', sans-serif;transform:scaleX(0.9717);">Model</div>
<div class="t" id="t63" style="left:88.6px;top:882.50px;font-size:13px;line-height:13px;color:#c5c9d0;font-weight:normal;font-family:'Liberation Sans', sans-serif;transform:scaleX(0.9633);">NA</div>
<svg style="left:113px;top:878px" width="10" height="20" viewBox="0 0 10 20"><path d="M1 19L9 1" stroke="#4a505c" stroke-width="1.2"/></svg>
<svg style="left:133px;top:882px" width="14" height="14" viewBox="0 0 14 14"><path d="M7 0V14M0 7H14" stroke="#d3d7dd" stroke-width="2.2"/></svg>
<svg style="left:156px;top:878px" width="10" height="20" viewBox="0 0 10 20"><path d="M1 19L9 1" stroke="#4a505c" stroke-width="1.2"/></svg>
<div class="r" style="left:326px;top:875px;width:147px;height:27px;background:#2b303b;"></div>
<div class="r" style="left:475px;top:875px;width:51px;height:27px;background:#2b303b;"></div>
<div class="r" style="left:527.5px;top:875px;width:68px;height:27px;background:#2b303b;"></div>
<div class="r" style="left:599px;top:875px;width:161px;height:27px;background:#2b303b;"></div>
<div class="r" style="left:872px;top:875px;width:121px;height:27px;background:#2b303b;"></div>
<div class="r" style="left:994px;top:875px;width:110px;height:27px;background:#2b303b;"></div>
<div class="r" style="left:1104px;top:875px;width:158px;height:27px;background:#2b303b;"></div>
<div class="r" style="left:1263px;top:875px;width:43px;height:27px;background:#2b303b;"></div>
<div class="r" style="left:1307px;top:875px;width:26px;height:27px;background:#2b303b;"></div>
<div class="r" style="left:1334px;top:875px;width:104px;height:27px;background:#2b303b;"></div>
<div class="r" style="left:1438px;top:875px;width:26px;height:27px;background:#2b303b;"></div>
<div class="r" style="left:1465px;top:875px;width:45px;height:27px;background:#2b303b;"></div>
<div class="r" style="left:1510px;top:875px;width:29px;height:27px;background:#2b303b;"></div>
<div class="r" style="left:1540px;top:875px;width:65px;height:27px;background:#2b303b;"></div>
<div class="t" id="t64" style="left:362.4px;top:883.00px;font-size:13px;line-height:13px;color:#d0d4da;font-weight:normal;font-family:'Liberation Sans', sans-serif;transform:scaleX(0.9335);">1598.0, 8907.1, 0.0</div>
<div class="t" id="t65" style="left:479.0px;top:883.00px;font-size:13px;line-height:13px;color:#d0d4da;font-weight:normal;font-family:'Liberation Sans', sans-serif;transform:scaleX(0.9084);">MODEL</div>
<div class="r" style="left:625.7px;top:876px;width:23.3px;height:25px;background:#4a6d94;"></div>
<div class="r" style="left:762px;top:876px;width:23px;height:25px;background:#4a6d94;"></div>
<div class="r" style="left:787px;top:876px;width:23.8px;height:25px;background:#4a6d94;"></div>
<div class="r" style="left:899px;top:876px;width:23px;height:25px;background:#4a6d94;"></div>
<div class="r" style="left:1063.6px;top:876px;width:23.2px;height:25px;background:#4a6d94;"></div>
<div class="r" style="left:1109px;top:876px;width:23px;height:25px;background:#4a6d94;"></div>
<div class="r" style="left:1539.6px;top:876px;width:23.1px;height:25px;background:#4a6d94;"></div>
<svg style="left:532px;top:880px" width="18" height="18" viewBox="0 0 18 18"><path d="M2 1V17M6 1V17M10 1V17M14 1V17M0 4H17M0 8H17M0 12H17M0 16H17" stroke="#c8ccd2" stroke-width="1.3"/></svg>
<svg style="left:558px;top:880px" width="18" height="18" viewBox="0 0 18 18"><g fill="#c8ccd2"><circle cx="2" cy="2" r="1.3"/><circle cx="7" cy="2" r="1.3"/><circle cx="12" cy="2" r="1.3"/><circle cx="2" cy="8" r="1.3"/><circle cx="7" cy="8" r="1.3"/><circle cx="12" cy="8" r="1.3"/><circle cx="2" cy="14" r="1.3"/><circle cx="7" cy="14" r="1.3"/><circle cx="12" cy="14" r="1.3"/></g></svg>
<svg style="left:583px;top:887px" width="9" height="5" viewBox="0 0 9 5"><path d="M0 0H9L4.5 5Z" fill="#c8ccd2"/></svg>
<svg style="left:705.5px;top:887px" width="9" height="5" viewBox="0 0 9 5"><path d="M0 0H9L4.5 5Z" fill="#c8ccd2"/></svg>
<svg style="left:747.5px;top:887px" width="9" height="5" viewBox="0 0 9 5"><path d="M0 0H9L4.5 5Z" fill="#c8ccd2"/></svg>
<svg style="left:816px;top:887px" width="9" height="5" viewBox="0 0 9 5"><path d="M0 0H9L4.5 5Z" fill="#c8ccd2"/></svg>
<svg style="left:858px;top:887px" width="9" height="5" viewBox="0 0 9 5"><path d="M0 0H9L4.5 5Z" fill="#c8ccd2"/></svg>
<svg style="left:980px;top:887px" width="9" height="5" viewBox="0 0 9 5"><path d="M0 0H9L4.5 5Z" fill="#c8ccd2"/></svg>
<svg style="left:1092px;top:887px" width="9" height="5" viewBox="0 0 9 5"><path d="M0 0H9L4.5 5Z" fill="#c8ccd2"/></svg>
<svg style="left:1249px;top:887px" width="9" height="5" viewBox="0 0 9 5"><path d="M0 0H9L4.5 5Z" fill="#c8ccd2"/></svg>
<svg style="left:1294px;top:887px" width="9" height="5" viewBox="0 0 9 5"><path d="M0 0H9L4.5 5Z" fill="#c8ccd2"/></svg>
<svg style="left:1425px;top:887px" width="9" height="5" viewBox="0 0 9 5"><path d="M0 0H9L4.5 5Z" fill="#c8ccd2"/></svg>
<svg style="left:1496.4px;top:887px" width="9" height="5" viewBox="0 0 9 5"><path d="M0 0H9L4.5 5Z" fill="#c8ccd2"/></svg>
<svg style="left:602px;top:880px" width="17" height="18" viewBox="0 0 17 18"><rect x="1" y="12" width="6" height="5" fill="#c8ccd2"/><path d="M7 12V3H15V9H9" stroke="#c8ccd2" stroke-width="1.3" fill="none"/></svg>
<svg style="left:628px;top:880px" width="20" height="18" viewBox="0 0 20 18"><path d="M4 1V8M0.5 4.5H7.5" stroke="#e8ecf0" stroke-width="1.5"/><rect x="7" y="9" width="12" height="5" fill="#e8ecf0"/></svg>
<svg style="left:654px;top:880px" width="18" height="18" viewBox="0 0 18 18"><path d="M2 1V16H17M6 10V16" stroke="#c8ccd2" stroke-width="1.3" fill="none"/></svg>
<svg style="left:680px;top:880px" width="18" height="18" viewBox="0 0 18 18"><circle cx="8" cy="10" r="6.5" stroke="#c8ccd2" stroke-width="1.3" fill="none"/><path d="M8 10L16 2M8 10H16" stroke="#c8ccd2" stroke-width="1.3"/></svg>
<svg style="left:723px;top:880px" width="16" height="18" viewBox="0 0 16 18"><path d="M2 1L14 17" stroke="#c04040" stroke-width="1.3"/><path d="M8 0V18" stroke="#40a040" stroke-width="1.3"/><circle cx="8" cy="9" r="1.8" fill="none" stroke="#c8ccd2"/></svg>
<svg style="left:765px;top:880px" width="18" height="18" viewBox="0 0 18 18"><path d="M2 16H16M2 16L14 4" stroke="#e8ecf0" stroke-width="1.3"/><circle cx="8" cy="10" r="1.5" fill="#e8ecf0"/></svg>
<svg style="left:790px;top:880px" width="18" height="18" viewBox="0 0 18 18"><rect x="4" y="4" width="12" height="12" fill="none" stroke="#e8ecf0" stroke-width="1.3"/><rect x="1" y="1" width="5" height="5" fill="#4a6d94" stroke="#e8ecf0"/></svg>
<svg style="left:833px;top:879px" width="18" height="20" viewBox="0 0 18 20"><rect x="2" y="3" width="14" height="15" fill="none" stroke="#8a8f98" stroke-width="1.3"/><rect x="1" y="0" width="5" height="5" fill="#3a9a3a"/><path d="M5 10L9 7L13 10L9 13Z" fill="#9aa0aa"/></svg>
<svg style="left:874px;top:880px" width="18" height="18" viewBox="0 0 18 18"><path d="M1 3H17M1 7H12M1 11H17M1 15H10" stroke="#c8ccd2" stroke-width="2"/></svg>
<svg style="left:901px;top:879px" width="19" height="20" viewBox="0 0 19 20"><rect x="1" y="1" width="17" height="17" fill="none" stroke="#e8ecf0" stroke-width="1.3"/><path d="M3 3h3v3h-3zM9 3h3v3h-3zM6 6h3v3h-3zM12 6h3v3h-3zM3 9h3v3h-3zM9 9h3v3h-3zM6 12h3v3h-3zM12 12h3v3h-3z" fill="#e8ecf0"/></svg>
<svg style="left:929px;top:879px" width="18" height="20" viewBox="0 0 18 20"><path d="M3 1V7M0 4H6" stroke="#c8ccd2" stroke-width="1.3"/><rect x="7" y="7" width="11" height="12" fill="#58b058"/></svg>
<svg style="left:955px;top:879px" width="20" height="20" viewBox="0 0 20 20"><path d="M3 8L9 2H18V12L12 18H3ZM3 8H12V18M12 8L18 2" stroke="#c8ccd2" stroke-width="1.3" fill="none"/><rect x="1" y="14" width="5" height="5" fill="none" stroke="#d08020"/></svg>
<svg style="left:999px;top:878px" width="19" height="21" viewBox="0 0 19 21"><path d="M3 1V18H18M3 1L0 5M3 1L6 5M18 18L14 15M18 18L14 21" stroke="#c8ccd2" stroke-width="1.3" fill="none"/><path d="M9 10L13 6L12 10L15 9" stroke="#c8ccd2" stroke-width="1.3" fill="none"/></svg>
<svg style="left:1025px;top:879px" width="20" height="20" viewBox="0 0 20 20"><path d="M5 5L8 2H18V12L15 15M5 5H15V15H5Z" stroke="#c8ccd2" stroke-width="1.3" fill="none"/><rect x="3" y="3" width="4" height="4" fill="#5aa0e0"/><rect x="13" y="13" width="4" height="4" fill="#5aa0e0"/></svg>
<svg style="left:1066px;top:878px" width="19" height="21" viewBox="0 0 19 21"><path d="M9.5 1L17 5.5V14.5L9.5 19L2 14.5V5.5Z M9.5 10L17 5.5M9.5 10L2 5.5M9.5 10V19" stroke="#e8ecf0" stroke-width="1.3" fill="none"/></svg>
<svg style="left:1111px;top:878px" width="20" height="21" viewBox="0 0 20 21"><path d="M8 1L14 19L8 13L2 19Z" fill="#e8ecf0"/><circle cx="16" cy="4" r="3" fill="none" stroke="#e8ecf0" stroke-width="1.2"/></svg>
<svg style="left:1137px;top:878px" width="20" height="21" viewBox="0 0 20 21"><path d="M8 3L14 19L8 13L2 19Z" fill="#c8ccd2"/><path d="M13 1L11 7L15 6L13 11" stroke="#c8ccd2" stroke-width="1.2" fill="none"/></svg>
<svg style="left:1162px;top:878px" width="18" height="21" viewBox="0 0 18 21"><path d="M9 1L15 19L9 13L3 19Z" fill="#c8ccd2"/></svg>
<div class="t" id="t66" style="left:1189.0px;top:883.00px;font-size:13px;line-height:13px;color:#d0d4da;font-weight:normal;font-family:'Liberation Sans', sans-serif;transform:scaleX(0.8784);">1:1 / 100%</div>
<svg style="left:1268px;top:879px" width="18" height="18" viewBox="0 0 18 18"><path d="M7.5 0h3l.5 2.6 2 .9 2.2-1.5 2.1 2.1-1.5 2.2.9 2 2.6.5v3l-2.6.5-.9 2 1.5 2.2-2.1 2.1-2.2-1.5-2 .9-.5 2.6h-3l-.5-2.6-2-.9-2.2 1.5-2.1-2.1 1.5-2.2-.9-2L0 10.5v-3l2.6-.5.9-2L2 2.8 4.1.7l2.2 1.5 2-.9z" fill="#c8ccd2"/><circle cx="9" cy="9" r="3" fill="#2b303b"/></svg>
<svg style="left:1311px;top:879px" width="18" height="18" viewBox="0 0 18 18"><path d="M9 0V18M0 9H18" stroke="#c8ccd2" stroke-width="1.8"/></svg>
<svg style="left:1343px;top:879px" width="10" height="19" viewBox="0 0 10 19"><rect x="1" y="0" width="8" height="19" fill="#c8ccd2"/><path d="M5 3H9M6 6H9M5 9H9M6 12H9M5 15H9" stroke="#2b303b" stroke-width="1"/></svg>
<div class="t" id="t67" style="left:1366.7px;top:883.00px;font-size:13px;line-height:13px;color:#d0d4da;font-weight:normal;font-family:'Liberation Sans', sans-serif;transform:scaleX(0.9751);">Decimal</div>
<svg style="left:1445px;top:879px" width="14" height="18" viewBox="0 0 14 18"><rect x="0.7" y="0.7" width="12.5" height="16.5" fill="none" stroke="#c8ccd2" stroke-width="1.3"/><path d="M3 5H11M3 9H11M3 13H11" stroke="#c8ccd2" stroke-width="1.2"/></svg>
<svg style="left:1471px;top:879px" width="19" height="19" viewBox="0 0 19 19"><rect x="0.7" y="0.7" width="14" height="12" fill="none" stroke="#c8ccd2" stroke-width="1.3"/><path d="M0.7 3.5H14.7" stroke="#c8ccd2"/><rect x="10" y="11" width="8" height="7" fill="#c8ccd2"/></svg>
<svg style="left:1513px;top:878px" width="19" height="20" viewBox="0 0 19 20"><rect x="0.7" y="0.7" width="6" height="6" fill="none" stroke="#c8ccd2" stroke-width="1.2"/><circle cx="14" cy="10" r="3.5" fill="none" stroke="#c8ccd2" stroke-width="1.2"/><path d="M6 12L9.5 18H2.5Z" fill="none" stroke="#c8ccd2" stroke-width="1.2"/></svg>
<svg style="left:1542px;top:879px" width="19" height="19" viewBox="0 0 19 19"><circle cx="9.5" cy="9.5" r="8" fill="none" stroke="#8fa8c8" stroke-width="1.5"/><path d="M6 13L13 6" stroke="#8fa8c8" stroke-width="1.5"/></svg>
<svg style="left:1573px;top:878px" width="18" height="20" viewBox="0 0 18 20"><circle cx="6" cy="6" r="4" fill="none" stroke="#c8ccd2" stroke-width="2.8" stroke-dasharray="1.6 1.4"/><circle cx="12" cy="14" r="4" fill="none" stroke="#c8ccd2" stroke-width="2.8" stroke-dasharray="1.6 1.4"/></svg>
<svg style="left:1595px;top:878px" width="10" height="20" viewBox="0 0 10 20"><path d="M5 1V10" stroke="#5aa0e0" stroke-width="1.5"/><rect x="1" y="10" width="9" height="7" fill="#d0a020"/></svg>
<svg style="left:1050px;top:887px" width="9" height="5" viewBox="0 0 9 5"><path d="M0 0H9L4.5 5Z" fill="#c8ccd2"/></svg>
<div class="r" style="left:95px;top:108px;width:1140px;height:32px;background:#4b535b;"></div>
<div class="r" style="left:95px;top:140px;width:1140px;height:327px;background:#ffffff;"></div>
<div class="r" style="left:95px;top:140px;width:1px;height:327px;background:#9aa0a6;"></div>
<div class="t" id="t68" style="left:126.7px;top:118.00px;font-size:13px;line-height:13px;color:#eef0f2;font-weight:normal;font-family:'Liberation Sans', sans-serif;transform:scaleX(0.9467);">Lock Manager</div>
<div class="r" style="left:101px;top:178px;width:1128px;height:246px;background:#ffffff;box-sizing:border-box;border:1px solid #c9c9c9;"></div>
<div class="r" style="left:102px;top:179px;width:1126px;height:34px;background:#f0f0f0;"></div>
<div class="r" style="left:102px;top:213px;width:1126px;height:26px;background:#c6c6c6;"></div>
<div class="r" style="left:1066px;top:434px;width:79px;height:27px;background:#e5e5e5;box-sizing:border-box;border:1px solid #c4c4c4;"></div>
<div class="r" style="left:1150px;top:434px;width:79px;height:27px;background:#ffffff;box-sizing:border-box;border:1px solid #c9c9c9;"></div>
<div class="t" id="t69" style="left:1097.0px;top:442.00px;font-size:13px;line-height:13px;color:#a3a3a3;font-weight:normal;font-family:'Liberation Sans', sans-serif;transform:scaleX(0.8778);">OK</div>
<div class="t" id="t70" style="left:1171.5px;top:442.00px;font-size:13px;line-height:13px;color:#333;font-weight:normal;font-family:'Liberation Sans', sans-serif;transform:scaleX(0.8772);">Cancel</div>
<div class="t" id="t71" style="left:101.5px;top:442.00px;font-size:13px;line-height:13px;color:#555;font-weight:normal;font-family:'Liberation Sans', sans-serif;transform:scaleX(0.9430);">Total Items Loaded:</div>
<div class="t" id="t72" style="left:218.9px;top:442.00px;font-size:13px;line-height:13px;color:#555;font-weight:normal;font-family:'Liberation Sans', sans-serif;">1</div>
<svg style="left:105px;top:116px" width="16" height="16" viewBox="0 0 16 16"><rect x="0" y="0" width="16" height="16" fill="#0f2b37"/><path d="M1 4.5L5.5 4L8 2L10.5 4L15 4.5L13.5 8.5Q8 11 2.5 8.5Z" fill="#f4f6f7"/><circle cx="8" cy="4.6" r="1.1" fill="#0f2b37"/><path d="M3 10.5Q8 12.5 13 10.5M4.5 12.5Q8 13.8 11.5 12.5" stroke="#3fa0a8" stroke-width="0.9" fill="none"/></svg>
<div class="r" style="left:1109px;top:124px;width:11px;height:1px;background:#e6e8ea;"></div>
<div class="r" style="left:1156px;top:118px;width:11px;height:11px;background:transparent;box-sizing:border-box;border:1px solid #e6e8ea;"></div>
<svg style="left:1204px;top:118px" width="12" height="12" viewBox="0 0 12 12"><path d="M0.5 0.5L11.5 11.5M11.5 0.5L0.5 11.5" stroke="#e6e8ea" stroke-width="1.1"/></svg>
<div class="r" style="left:101px;top:145px;width:27px;height:28px;background:#ffffff;box-sizing:border-box;border:1px solid #d4d4d4;"></div>
<div class="r" style="left:133px;top:145px;width:28px;height:28px;background:#ffffff;box-sizing:border-box;border:2px solid #5a7fa3;"></div>
<div class="r" style="left:166px;top:146px;width:1px;height:26px;background:#d8d8d8;"></div>
<div class="r" style="left:172px;top:145px;width:28px;height:28px;background:#e8e8e8;box-sizing:border-box;border:1px solid #cfcfcf;"></div>
<svg style="left:106px;top:151px" width="17" height="17" viewBox="0 0 17 17"><path d="M1 5H8M1 7.5H8M1 10H8M1 12.5H8M1 15H8" stroke="#3b3f44" stroke-width="1"/><path d="M9.5 8V5A3.5 3.5 0 0 1 16.5 5V8" stroke="#6f9fb5" stroke-width="1.8" fill="none"/><rect x="7.5" y="7.5" width="9.5" height="8.5" fill="#6f9fb5"/><rect x="11.5" y="11" width="1.6" height="1.6" fill="#fff"/></svg>
<svg style="left:139px;top:151px" width="17" height="17" viewBox="0 0 17 17"><path d="M4 6H15M4 8.5H8M4 11H8M4 13.5H8M4 16H8" stroke="#3b3f44" stroke-width="1"/><path d="M1.5 8V4.5A3.2 3.2 0 0 1 8 4.5" stroke="#f0a020" stroke-width="1.8" fill="none"/><rect x="7" y="8" width="9.5" height="9" fill="#f5a623"/><rect x="10.8" y="11.5" width="1.6" height="1.6" fill="#fff"/></svg>
<svg style="left:177px;top:151px" width="18" height="15" viewBox="0 0 18 15"><circle cx="6.5" cy="5" r="3" fill="#8a8a8a"/><path d="M1 13.5Q1.5 8.5 6.5 8.5Q11.5 8.5 12 13.5Z" fill="#8a8a8a"/><circle cx="12" cy="4.5" r="3" fill="#9a9a9a"/><path d="M7.5 12.5Q8 7.5 12 7.5Q16.5 7.5 17 12.5Z" fill="#9a9a9a"/></svg>
<div class="r" style="left:258.6px;top:179px;width:1px;height:34px;background:#d6d6d6;"></div>
<div class="r" style="left:363.3px;top:179px;width:1px;height:34px;background:#d6d6d6;"></div>
<div class="r" style="left:479.3px;top:179px;width:1px;height:34px;background:#d6d6d6;"></div>
<div class="r" style="left:626.1px;top:179px;width:1px;height:34px;background:#d6d6d6;"></div>
<div class="r" style="left:773.6px;top:179px;width:1px;height:34px;background:#d6d6d6;"></div>
<div class="r" style="left:921.2px;top:179px;width:1px;height:34px;background:#d6d6d6;"></div>
<div class="r" style="left:1079px;top:179px;width:1px;height:34px;background:#d6d6d6;"></div>
<div class="r" style="left:102px;top:212px;width:1126px;height:1px;background:#d9d9d9;"></div>
<div class="t" id="t73" style="left:106.6px;top:190.30px;font-size:13px;line-height:13px;color:#3a3a3a;font-weight:bold;font-family:'Liberation Sans', sans-serif;transform:scaleX(0.9543);">Plate Nest</div>
<svg style="left:241px;top:193px" width="9" height="9" viewBox="0 0 9 9"><path d="M0 0H9L5.5 4V9H3.5V4Z" fill="#3a3a3a"/></svg>
<div class="t" id="t74" style="left:264.0px;top:190.30px;font-size:13px;line-height:13px;color:#3a3a3a;font-weight:bold;font-family:'Liberation Sans', sans-serif;transform:scaleX(0.9008);">Locked</div>
<svg style="left:341.5px;top:193px" width="9" height="9" viewBox="0 0 9 9"><path d="M0 0H9L5.5 4V9H3.5V4Z" fill="#3a3a3a"/></svg>
<div class="t" id="t75" style="left:369.0px;top:190.30px;font-size:13px;line-height:13px;color:#3a3a3a;font-weight:bold;font-family:'Liberation Sans', sans-serif;transform:scaleX(0.9395);">Include Parts</div>
<svg style="left:461px;top:193px" width="9" height="9" viewBox="0 0 9 9"><path d="M0 0H9L5.5 4V9H3.5V4Z" fill="#3a3a3a"/></svg>
<div class="t" id="t76" style="left:485.0px;top:190.30px;font-size:13px;line-height:13px;color:#3a3a3a;font-weight:bold;font-family:'Liberation Sans', sans-serif;transform:scaleX(0.9313);">Locked Date</div>
<svg style="left:608px;top:193px" width="9" height="9" viewBox="0 0 9 9"><path d="M0 0H9L5.5 4V9H3.5V4Z" fill="#3a3a3a"/></svg>
<div class="t" id="t77" style="left:631.6px;top:190.30px;font-size:13px;line-height:13px;color:#3a3a3a;font-weight:bold;font-family:'Liberation Sans', sans-serif;transform:scaleX(0.9095);">Locked By</div>
<svg style="left:755.5px;top:193px" width="9" height="9" viewBox="0 0 9 9"><path d="M0 0H9L5.5 4V9H3.5V4Z" fill="#3a3a3a"/></svg>
<div class="t" id="t78" style="left:778.9px;top:190.30px;font-size:13px;line-height:13px;color:#3a3a3a;font-weight:bold;font-family:'Liberation Sans', sans-serif;transform:scaleX(0.9557);">Drawing Path</div>
<svg style="left:903.7px;top:193px" width="9" height="9" viewBox="0 0 9 9"><path d="M0 0H9L5.5 4V9H3.5V4Z" fill="#3a3a3a"/></svg>
<div class="t" id="t79" style="left:926.5px;top:190.30px;font-size:13px;line-height:13px;color:#3a3a3a;font-weight:bold;font-family:'Liberation Sans', sans-serif;transform:scaleX(0.8607);">Access</div>
<svg style="left:1060.6px;top:193px" width="9" height="9" viewBox="0 0 9 9"><path d="M0 0H9L5.5 4V9H3.5V4Z" fill="#3a3a3a"/></svg>
<div class="t" id="t80" style="left:106.6px;top:220.60px;font-size:13px;line-height:13px;color:#484848;font-weight:normal;font-family:'Liberation Sans', sans-serif;transform:scaleX(0.8932);">843_PL15-001</div>
<div class="t" id="t81" style="left:778.9px;top:220.60px;font-size:13px;line-height:13px;color:#484848;font-weight:normal;font-family:'Liberation Sans', sans-serif;transform:scaleX(0.9289);">Nests\843\843_PL15.dwg</div>
<svg style="left:304px;top:218px" width="15" height="16" viewBox="0 0 15 16"><path d="M3 8V4.5A3 3 0 0 1 9 4.5V5" stroke="#f5a623" stroke-width="1.6" fill="none"/><rect x="5" y="8" width="10" height="8" fill="#f5a623"/><rect x="9" y="11.5" width="2" height="2" fill="#fff3d0"/></svg>
<div class="r" style="left:417px;top:220.5px;width:12.5px;height:12.5px;background:#e9e9e9;box-sizing:border-box;border:1px solid #d5d5d5;"></div>
<div class="r" style="left:1057px;top:216px;width:21.5px;height:21.5px;background:#e6e6e6;box-sizing:border-box;border:1px solid #d6d6d6;"></div>
<div class="t" id="t82" style="left:1063.5px;top:225.50px;font-size:9px;line-height:9px;color:#888;font-weight:normal;font-family:'Liberation Sans', sans-serif;">...</div>
<svg style="left:940px;top:235px" width="14" height="22" viewBox="0 0 14 22"><path d="M1 1V17L5 13.5L8 20L10.5 19L7.5 12.5H12.5Z" fill="#ffffff" stroke="#1a1a1a" stroke-width="1" stroke-linejoin="round"/></svg>
</body></html>
